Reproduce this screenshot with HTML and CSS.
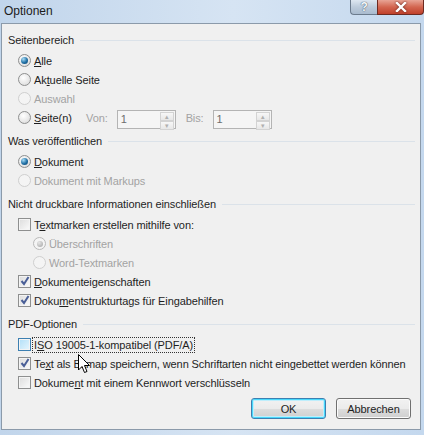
FILE: index.html
```html
<!DOCTYPE html>
<html lang="de">
<head>
    <meta charset="UTF-8">
    <title>Optionen</title>
    <link rel="stylesheet" href="styles.css">
</head>
<body>
    <div class="window">
        <div class="titlebar">
            <span class="title">Optionen</span>
            <div class="caption-buttons">
                <span class="cap-btn help">?</span>
                <span class="cap-btn close">
                    <svg width="12" height="10" viewBox="0 0 12 10"><path d="M2 1 L10 9 M10 1 L2 9" stroke="#fff" stroke-width="2.4" stroke-linecap="square"/></svg>
                </span>
            </div>
        </div>

        <div class="client">
            <div class="group-head"><span>Seitenbereich</span><span class="rule"></span></div>
            <div class="row"><span class="radio checked"></span><span><u>A</u>lle</span></div>
            <div class="row"><span class="radio"></span><span>Ak<u>t</u>uelle Seite</span></div>
            <div class="row disabled"><span class="radio"></span><span>Auswahl</span></div>
            <div class="row pages"><span class="radio"></span><span class="pages-label"><u>S</u>eite(n)</span>
                <span class="range-label disabled-text">Von:</span>
                <span class="spin"><span class="spin-value">1</span><span class="spin-arrows"><span>&#9652;</span><span>&#9662;</span></span></span>
                <span class="range-label second disabled-text">Bis:</span>
                <span class="spin"><span class="spin-value">1</span><span class="spin-arrows"><span>&#9652;</span><span>&#9662;</span></span></span>
            </div>

            <div class="group-head"><span>Was veröffentlichen</span><span class="rule"></span></div>
            <div class="row"><span class="radio checked"></span><span><u>D</u>okument</span></div>
            <div class="row disabled"><span class="radio"></span><span>Dokument mit Markups</span></div>

            <div class="group-head"><span>Nicht druckbare Informationen einschließen</span><span class="rule"></span></div>
            <div class="row"><span class="check"></span><span>T<u>e</u>xtmarken erstellen mithilfe von:</span></div>
            <div class="row sub disabled"><span class="radio dot-gray"></span><span>Überschriften</span></div>
            <div class="row sub disabled"><span class="radio"></span><span>Word-Textmarken</span></div>
            <div class="row"><span class="check checked"></span><span><u>D</u>okumenteigenschaften</span></div>
            <div class="row"><span class="check checked"></span><span>Doku<u>m</u>entstrukturtags für Eingabehilfen</span></div>

            <div class="group-head"><span>PDF-Optionen</span><span class="rule"></span></div>
            <div class="row"><span class="check hover"></span><span class="focus">I<u>S</u>O 19005-1-kompatibel (PDF/A)</span></div>
            <div class="row"><span class="check checked"></span><span>Te<u>x</u>t als Bitmap speichern, wenn Schriftarten nicht eingebettet werden können</span></div>
            <div class="row"><span class="check"></span><span>Dokume<u>n</u>t mit einem Kennwort verschlüsseln</span></div>

            <div class="actions">
                <span class="button default">OK</span>
                <span class="button">Abbrechen</span>
            </div>

            <svg class="cursor" width="13" height="20" viewBox="0 0 13 20">
                <path d="M0.5 0.5 L0.5 16 L4 12.5 L6.5 18.5 L9 17.5 L6.5 11.5 L11.5 11.5 Z" fill="#fff" stroke="#000" stroke-width="1" stroke-linejoin="miter"/>
            </svg>
        </div>
    </div>
</body>
</html>
```

FILE: styles.css
```css
* {
    box-sizing: border-box;
    margin: 0;
    padding: 0;
}

body {
    width: 424px;
    height: 435px;
    overflow: hidden;
    background-color: #c9dbee;
    font-family: "Liberation Sans", Arial, sans-serif;
    font-size: 11px;
    letter-spacing: -0.1px;
    color: #1e1e1e;
}

.window {
    height: 435px;
    display: flex;
    flex-direction: column;
    background: linear-gradient(to right, #c1d5eb, #d6e4f3 55%, #c4d8ee);
    padding: 0 3px 5px 1px;
}

.titlebar {
    height: 23px;
    display: flex;
    align-items: flex-start;
    justify-content: space-between;
}

.title {
    font-size: 12px;
    letter-spacing: 0;
    color: #1b1b1b;
    padding: 4px 0 0 3px;
}

.caption-buttons {
    display: flex;
    margin-right: -3px;
}

.cap-btn {
    height: 15px;
    display: flex;
    align-items: center;
    justify-content: center;
    border: 1px solid #6b7b8d;
    border-top: none;
}

.help {
    width: 27px;
    border-radius: 0 0 0 4px;
    border-right: none;
    background: linear-gradient(to bottom, #dde7f1, #bccbdb 50%, #a9bbcf);
    color: #f4f7fa;
    font-weight: bold;
    font-size: 12px;
    text-shadow: 0 0 1px #4b5b6d, 0 0 1px #4b5b6d;
}

.close {
    width: 47px;
    border-radius: 0 0 4px 0;
    border-color: #6d2a21;
    background: linear-gradient(to bottom, #e8a495, #d36650 50%, #c0402b);
}

.close svg {
    filter: drop-shadow(0 0 1px #5a1a12);
}

.client {
    flex: 1;
    position: relative;
    background-color: #f0f0f0;
    border: 1px solid #8b9aaa;
    padding: 6px 5px 0 6px;
}

.group-head {
    display: flex;
    align-items: center;
    gap: 6px;
    height: 19px;
    margin: 4px 0 2px 0;
}

.group-head:first-child {
    margin-top: 0;
}

.rule {
    flex: 1;
    border-top: 1px solid #dbe2e9;
    margin-top: 1px;
}

.row {
    display: flex;
    align-items: center;
    gap: 3px;
    height: 19px;
    padding-left: 10px;
    white-space: nowrap;
}

.row.sub {
    padding-left: 25px;
}

.row.pages {
    margin-bottom: 4px;
}

.disabled,
.disabled-text {
    color: #a3a3a3;
}

.radio {
    width: 13px;
    height: 13px;
    border-radius: 50%;
    border: 1px solid #8e8f8f;
    background: radial-gradient(circle at 40% 35%, #ffffff, #e2e2e2 70%, #cfd0d0);
    display: flex;
    align-items: center;
    justify-content: center;
    flex-shrink: 0;
}

.radio.checked::after {
    content: "";
    width: 7px;
    height: 7px;
    border-radius: 50%;
    background: radial-gradient(circle at 35% 30%, #a8dcf6, #1f6fa4 55%, #0c3f6a);
}

.disabled .radio {
    border-color: #cfcfcf;
    background: #f4f4f4;
}

.disabled .radio.dot-gray {
    border-color: #b9b9b9;
}

.radio.dot-gray::after {
    content: "";
    width: 6px;
    height: 6px;
    border-radius: 50%;
    background: radial-gradient(circle at 35% 30%, #e6e6e6, #a3a3a3);
}

.check {
    width: 13px;
    height: 13px;
    border: 1px solid #8e8f8f;
    background: linear-gradient(135deg, #dcdcdc, #fbfbfb);
    box-shadow: inset 0 0 0 1px #f4f4f4;
    flex-shrink: 0;
    position: relative;
}

.check.hover {
    border-color: #3c7fb1;
    background: linear-gradient(135deg, #b1dff8, #e8f6fd);
}

.check.checked::after {
    content: "";
    position: absolute;
    left: 1px;
    top: 0;
    width: 10px;
    height: 10px;
    background: url("data:image/svg+xml,%3Csvg xmlns='http://www.w3.org/2000/svg' width='10' height='10'%3E%3Cpath d='M1.5 5 L4 8 L8.5 1' fill='none' stroke='%234a5f97' stroke-width='2'/%3E%3C/svg%3E") no-repeat;
}

.focus {
    outline: 1px dotted #333;
    padding: 1px 1px;
    margin-left: -1px;
}

.pages-label {
    width: 49px;
}

.range-label {
    margin-right: 6px;
}

.range-label.second {
    margin-left: 7px;
}

.spin {
    display: flex;
    width: 59px;
    height: 19px;
    margin-top: 3px;
    border: 1px solid #b4b4b4;
    background-color: #f5f5f5;
}

.spin-value {
    flex: 1;
    padding: 2px 0 0 3px;
    color: #6d6d6d;
}

.spin-arrows {
    width: 15px;
    display: flex;
    flex-direction: column;
    padding: 1px 1px 1px 0;
}

.spin-arrows span {
    flex: 1;
    font-size: 7px;
    line-height: 7px;
    text-align: center;
    color: #b0b0b0;
    background: linear-gradient(#f7f7f7, #e7e7e7);
    border: 1px solid #d3d3d3;
}

.actions {
    display: flex;
    justify-content: flex-end;
    gap: 10px;
    padding: 6px 4px 0 0;
}

.button {
    width: 75px;
    height: 21px;
    display: flex;
    align-items: center;
    justify-content: center;
    border: 1px solid #707070;
    border-radius: 3px;
    background: linear-gradient(to bottom, #f2f2f2, #ebebeb 50%, #dddddd 51%, #cfcfcf);
    box-shadow: inset 0 0 0 1px #fbfbfb;
    color: #1e1e1e;
}

.button.default {
    border-color: #3c7fb1;
    box-shadow: inset 0 0 0 1px #48d8fb, inset 0 0 0 2px #bfeefc;
}

.cursor {
    position: absolute;
    left: 76px;
    top: 330px;
}
```
